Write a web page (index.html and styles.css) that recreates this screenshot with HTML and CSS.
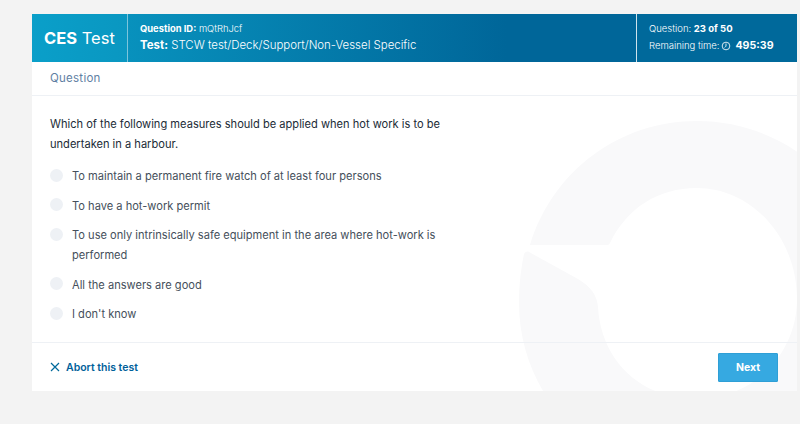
FILE: index.html
```html
<!DOCTYPE html>
<html lang="en">
<head>
  <meta charset="UTF-8">
  <meta name="viewport" content="width=device-width, initial-scale=1.0">
  <title>CES Test</title>
  <link rel="stylesheet" href="styles.css">
</head>
<body>
  <div class="card">
    <svg class="watermark" viewBox="32 14 765 377" aria-hidden="true">
      <path d="M530 245 C553 170 620 121 697 121 C795 121 875 200 875 299 C875 400 795 480 697 480 C600 480 519 400 519 303 C519 285 521 268 524 254 C525 252 527 251 529 252 L578 279 C591 287 597 295 598 307 C601 360 640 399 697 399 C752 399 797 355 797 299 C797 238 752 188 697 188 C658 188 627 208 610 243 C609 245 608 245 606 245 L531 245 C529 245 529 246 530 245 Z"/>
    </svg>

    <header class="top">
      <div class="brand"><b>CES</b> Test</div>
      <div class="info">
        <div class="info-id"><b>Question ID:</b> mQtRhJcf</div>
        <div class="info-test"><b>Test:</b> STCW test/Deck/Support/Non-Vessel Specific</div>
      </div>
      <div class="status">
        <div class="status-count">Question: <b>23 of 50</b></div>
        <div class="status-time">
          Remaining time:
          <svg class="clock" viewBox="0 0 12 12">
            <circle cx="6" cy="6" r="4.6"/>
            <path d="M6 3v3.2l-1.6 1.6"/>
          </svg>
          <b>495:39</b>
        </div>
      </div>
    </header>

    <div class="section-title">Question</div>

    <main class="body">
      <p class="question">Which of the following measures should be applied when hot work is to be undertaken in a harbour.</p>
      <ul class="options">
        <li class="option"><span class="radio"></span><span>To maintain a permanent fire watch of at least four persons</span></li>
        <li class="option"><span class="radio"></span><span>To have a hot-work permit</span></li>
        <li class="option"><span class="radio"></span><span>To use only intrinsically safe equipment in the area where hot-work is performed</span></li>
        <li class="option"><span class="radio"></span><span>All the answers are good</span></li>
        <li class="option"><span class="radio"></span><span>I don't know</span></li>
      </ul>
    </main>

    <footer class="actions">
      <a class="abort" href="#">
        <svg class="abort-icon" viewBox="0 0 10 10"><path d="M1 1l8 8M9 1l-8 8"/></svg>
        Abort this test
      </a>
      <button class="next">Next</button>
    </footer>
  </div>
</body>
</html>
```

FILE: styles.css
```css
html, body {
  height: 100%;
}

body {
  margin: 0;
  background: #f3f3f3;
  font-family: "Inter", "Liberation Sans", sans-serif;
  color: #212b36;
  overflow: hidden;
}

.card {
  position: relative;
  width: 765px;
  height: 377px;
  margin: 14px 0 0 32px;
  background: #fff;
  overflow: hidden;
  display: flex;
  flex-direction: column;
}

.watermark {
  position: absolute;
  left: 0;
  top: 0;
  width: 765px;
  height: 377px;
  fill: #f9f9fa;
}

/* header bar */
.top {
  position: relative;
  height: 48px;
  display: flex;
  color: #fff;
  background: linear-gradient(to right, #0a9cc6, #006699 62%);
}

.brand {
  width: 96px;
  box-sizing: border-box;
  padding-left: 12px;
  font-size: 16.5px;
  line-height: 48px;
  border-right: 1px solid #7cc5dc;
  background: linear-gradient(to right, #0a9fc9, #0a97c1);
}

.info {
  flex: 1;
  padding: 8px 0 0 12px;
}

.info-id {
  font-size: 9.4px;
  line-height: 13px;
  font-weight: 300;
}

.info-test {
  font-size: 11.45px;
  line-height: 20px;
  font-weight: 300;
}

.info b {
  font-weight: 700;
}

.status {
  width: 161px;
  box-sizing: border-box;
  padding: 8px 0 0 12px;
  font-size: 9.5px;
  font-weight: 300;
  background: #00699b;
  border-left: 1px solid #cfe3ec;
}

.status b {
  font-weight: 700;
}

.status-count {
  line-height: 14px;
}

.status-time {
  display: flex;
  align-items: center;
  gap: 2px;
  line-height: 20px;
}

.status-time b {
  font-size: 10.6px;
  margin-left: 2px;
}

.clock {
  width: 10px;
  height: 10px;
  fill: none;
  stroke: #fff;
  stroke-width: 1;
}

.section-title {
  position: relative;
  height: 34px;
  box-sizing: border-box;
  padding-left: 18px;
  font-size: 11.5px;
  letter-spacing: 0.25px;
  line-height: 33px;
  color: #5f7fa3;
  border-bottom: 1px solid #eef1f5;
}

/* question */
.body {
  position: relative;
  flex: 1;
  padding: 18px 0 0 18px;
}

.question {
  width: 400px;
  margin: 0 0 12px;
  font-size: 11.1px;
  line-height: 20px;
}

.options {
  list-style: none;
  margin: 0;
  padding: 0;
}

.option {
  display: flex;
  width: 400px;
  gap: 9px;
  margin-bottom: 9.5px;
  font-size: 11.1px;
  line-height: 20px;
  color: #454f5b;
}

.radio {
  flex: none;
  width: 13px;
  height: 13px;
  margin-top: 2.5px;
  border-radius: 50%;
  background: #eef1f5;
}

/* footer */
.actions {
  position: relative;
  height: 48px;
  display: flex;
  align-items: center;
  justify-content: space-between;
  padding: 0 19px 0 18px;
  border-top: 1px solid #eef1f5;
}

.abort {
  display: flex;
  align-items: center;
  gap: 6px;
  font-size: 10.5px;
  font-weight: 600;
  color: #00609a;
  text-decoration: none;
}

.abort-icon {
  width: 10px;
  height: 10px;
  fill: none;
  stroke: #00699b;
  stroke-width: 1.2;
}

.next {
  width: 60px;
  height: 29px;
  padding: 0;
  font-family: inherit;
  font-size: 10.5px;
  font-weight: 700;
  color: #fff;
  background: #36a9e1;
  border: 1px solid #2f9fd6;
  border-radius: 1px;
}
```
